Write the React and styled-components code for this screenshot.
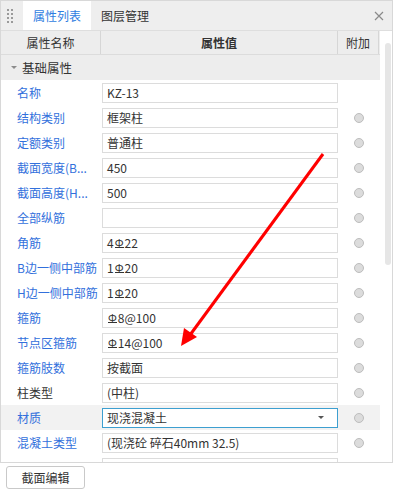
import React from 'react'
import styled, { createGlobalStyle } from 'styled-components'

const Global = createGlobalStyle`
  html, body { margin: 0; padding: 0; background: #fff; }
  body {
    font-family: "Noto Sans CJK SC", "Noto Sans", sans-serif;
    font-size: 12px;
    color: #333;
  }
`

const Page = styled.div`
  width: 393px;
  height: 493px;
  position: relative;
  display: flex;
  flex-direction: column;
`

const Panel = styled.div`
  height: 463px;
  flex: none;
  box-sizing: border-box;
  border: 1px solid #d8d8d8;
  display: flex;
  flex-direction: column;
  overflow: hidden;
`

const TabBar = styled.div`
  height: 29px;
  flex: none;
  display: flex;
  align-items: stretch;
  background: #eeeeee;
  border-bottom: 1px solid #dedede;
`

const Grip = styled.div`
  width: 22px;
  display: grid;
  grid-template-columns: 2px 2px;
  grid-template-rows: repeat(4, 2px);
  column-gap: 2px;
  row-gap: 2px;
  align-content: center;
  padding-left: 6px;
  box-sizing: border-box;
  span { background: #9a9a9a; }
`

const Tab = styled.div`
  padding: 0 10px;
  display: flex;
  align-items: center;
  font-size: 12px;
  color: ${p => (p.$active ? '#2f7de1' : '#333')};
  background: ${p => (p.$active ? '#fff' : 'transparent')};
`

const Close = styled.div`
  margin-left: auto;
  width: 26px;
  display: flex;
  align-items: center;
  justify-content: center;
  color: #8a8a8a;
`

const Body = styled.div`
  flex: 1;
  display: flex;
  min-height: 0;
`

const Table = styled.div`
  width: 379px;
  flex: none;
  display: flex;
  flex-direction: column;
`

const Cols = `grid-template-columns: 100px 237px 41px;`

const HeadRow = styled.div`
  display: grid;
  ${Cols}
  height: 23px;
  flex: none;
  background: #ededed;
  border-bottom: 1px solid #dcdcdc;
`

const HeadCell = styled.div`
  display: flex;
  align-items: center;
  justify-content: center;
  font-weight: ${p => (p.$bold ? 700 : 400)};
  border-right: 1px solid #d6d6d6;
`

const GroupRow = styled.div`
  height: 25px;
  flex: none;
  display: flex;
  align-items: center;
  gap: 5px;
  padding-left: 10px;
  background: #ededed;
  font-size: 12.5px;
`

const Caret = styled.span`
  width: 0;
  height: 0;
  border-left: 3px solid transparent;
  border-right: 3px solid transparent;
  border-top: 3px solid #8c8c8c;
`

const Row = styled.div`
  display: grid;
  ${Cols}
  height: 25px;
  flex: none;
  align-items: center;
  background: ${p => (p.$selected ? '#f2f2f2' : '#fff')};
`

const Label = styled.div`
  padding-left: 16px;
  color: ${p => (p.$plain ? '#333' : '#3270dc')};
  white-space: nowrap;
  overflow: hidden;
`

const Input = styled.div`
  margin-left: 1px;
  height: 20px;
  box-sizing: border-box;
  border: 1px solid ${p => (p.$focus ? '#3d9fd0' : '#dcdcdc')};
  background: #fff;
  display: flex;
  align-items: center;
  padding: 0 4px;
  white-space: nowrap;
  overflow: hidden;
  color: #333;
`

const Drop = styled.span`
  margin-left: auto;
  margin-right: 9px;
  border-left: 3px solid transparent;
  border-right: 3px solid transparent;
  border-top: 3px solid #555;
`

const Radio = styled.span`
  justify-self: center;
  width: 8px;
  height: 8px;
  border-radius: 50%;
  background: #dcdcdc;
  border: 1px solid #bdbdbd;
  margin-left: 1px;
`

const Bar = styled.span`
  display: inline-block;
  font-size: 11px;
  line-height: 10px;
  border-bottom: 1px solid #333;
  margin: 0 1px;
`

const ScrollTrack = styled.div`
  flex: 1;
  padding: 12px 0 0 5px;
`

const Thumb = styled.div`
  width: 6px;
  height: 222px;
  border-radius: 3px;
  background: #e6e6e6;
`

const Footer = styled.div`
  flex: 1;
  padding: 3px 6px;
`

const Button = styled.button`
  width: 79px;
  height: 23px;
  background: #fff;
  border: 1px solid #c9c9c9;
  border-radius: 3px;
  font-family: inherit;
  font-size: 12px;
  color: #333;
  padding: 0;
`

const Arrow = styled.svg`
  position: absolute;
  left: 0;
  top: 0;
  pointer-events: none;
`

const R = () => <Bar>Φ</Bar>

const rows = [
  { label: '名称', value: 'KZ-13', noRadio: true },
  { label: '结构类别', value: '框架柱' },
  { label: '定额类别', value: '普通柱' },
  { label: '截面宽度(B...', value: '450' },
  { label: '截面高度(H...', value: '500' },
  { label: '全部纵筋', value: '' },
  { label: '角筋', value: <>4<R />22</> },
  { label: 'B边一侧中部筋', value: <>1<R />20</> },
  { label: 'H边一侧中部筋', value: <>1<R />20</> },
  { label: '箍筋', value: <><R />8@100</> },
  { label: '节点区箍筋', value: <><R />14@100</> },
  { label: '箍筋肢数', value: '按截面' },
  { label: '柱类型', value: '(中柱)', plain: true },
  { label: '材质', value: '现浇混凝土', selected: true },
  { label: '混凝土类型', value: '(现浇砼 碎石40mm 32.5)' },
  { label: '', value: '', noRadio: true },
]

export default function App() {
  return (
    <Page>
      <Global />
      <Panel>
        <TabBar>
          <Grip>
            {Array.from({ length: 8 }).map((_, i) => <span key={i} />)}
          </Grip>
          <Tab $active>属性列表</Tab>
          <Tab>图层管理</Tab>
          <Close>
            <svg width="10" height="10" viewBox="0 0 10 10">
              <path d="M1 1L9 9M9 1L1 9" stroke="#8a8a8a" strokeWidth="1.2" />
            </svg>
          </Close>
        </TabBar>
        <Body>
          <Table>
            <HeadRow>
              <HeadCell>属性名称</HeadCell>
              <HeadCell $bold>属性值</HeadCell>
              <HeadCell>附加</HeadCell>
            </HeadRow>
            <GroupRow>
              <Caret />
              基础属性
            </GroupRow>
            {rows.map((r, i) => (
              <Row key={i} $selected={r.selected}>
                <Label $plain={r.plain}>{r.label}</Label>
                <Input $focus={r.selected}>
                  {r.value}
                  {r.selected && <Drop />}
                </Input>
                {r.noRadio ? <span /> : <Radio />}
              </Row>
            ))}
          </Table>
          <ScrollTrack>
            <Thumb />
          </ScrollTrack>
        </Body>
      </Panel>
      <Footer>
        <Button>截面编辑</Button>
      </Footer>
      <Arrow width="393" height="493" viewBox="0 0 393 493">
        <line x1="323" y1="154" x2="190" y2="335" stroke="#ff0000" strokeWidth="3" />
        <polygon points="181,346 184,328 197,337" fill="#ff0000" />
      </Arrow>
    </Page>
  )
}
